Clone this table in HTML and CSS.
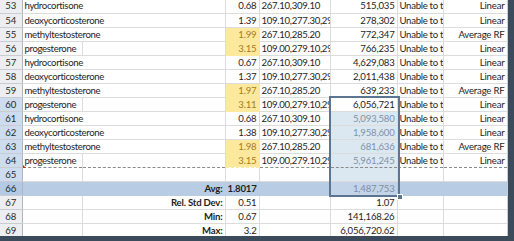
FILE: index.html
```html
<!DOCTYPE html>
<html>
<head>
<meta charset="utf-8">
<link rel="stylesheet" href="styles.css">
</head>
<body>
<div class="window">
  <div class="sheet">
    <table class="grid">
      <colgroup>
        <col class="c-h"><col class="c-a"><col class="c-b"><col class="c-c"><col class="c-d"><col class="c-e"><col class="c-f"><col class="c-g">
      </colgroup>
      <tbody>
        <tr><th>53</th><td class="ov">hydrocortisone</td><td></td><td class="r">0.68</td><td class="clip">267.10,309.10</td><td class="r">515,035</td><td class="clip">Unable to t</td><td class="r">Linear</td></tr>
        <tr><th>54</th><td class="ov">deoxycorticosterone</td><td></td><td class="r">1.39</td><td class="clip">109.10,277.30,29</td><td class="r">278,302</td><td class="clip">Unable to t</td><td class="r">Linear</td></tr>
        <tr><th>55</th><td class="ov">methyltestosterone</td><td></td><td class="r neutral">1.99</td><td class="clip">267.10,285.20</td><td class="r">772,347</td><td class="clip">Unable to t</td><td class="r">Average RF</td></tr>
        <tr><th>56</th><td class="nm">progesterone</td><td></td><td class="r neutral">3.15</td><td class="clip">109.00,279.10,29</td><td class="r">766,235</td><td class="clip">Unable to t</td><td class="r">Linear</td></tr>
        <tr><th>57</th><td class="ov">hydrocortisone</td><td></td><td class="r">0.67</td><td class="clip">267.10,309.10</td><td class="r">4,629,083</td><td class="clip">Unable to t</td><td class="r">Linear</td></tr>
        <tr><th>58</th><td class="ov">deoxycorticosterone</td><td></td><td class="r">1.37</td><td class="clip">109.10,277.30,29</td><td class="r">2,011,438</td><td class="clip">Unable to t</td><td class="r">Linear</td></tr>
        <tr><th>59</th><td class="ov">methyltestosterone</td><td></td><td class="r neutral">1.97</td><td class="clip">267.10,285.20</td><td class="r">639,233</td><td class="clip">Unable to t</td><td class="r">Average RF</td></tr>
        <tr class="selrow"><th>60</th><td class="nm">progesterone</td><td></td><td class="r neutral">3.11</td><td class="clip">109.00,279.10,29</td><td class="r active">6,056,721<div class="selection"><span class="handle"></span></div></td><td class="clip">Unable to t</td><td class="r">Linear</td></tr>
        <tr class="selrow"><th>61</th><td class="ov">hydrocortisone</td><td></td><td class="r">0.68</td><td class="clip">267.10,309.10</td><td class="r sel">5,093,580</td><td class="clip">Unable to t</td><td class="r">Linear</td></tr>
        <tr class="selrow"><th>62</th><td class="ov">deoxycorticosterone</td><td></td><td class="r">1.38</td><td class="clip">109.10,277.30,29</td><td class="r sel">1,958,600</td><td class="clip">Unable to t</td><td class="r">Linear</td></tr>
        <tr class="selrow"><th>63</th><td class="ov">methyltestosterone</td><td></td><td class="r neutral">1.98</td><td class="clip">267.10,285.20</td><td class="r sel">681,636</td><td class="clip">Unable to t</td><td class="r">Average RF</td></tr>
        <tr class="selrow dashed"><th>64</th><td class="nm mark">progesterone</td><td></td><td class="r neutral">3.15</td><td class="clip">109.00,279.10,29</td><td class="r sel">5,961,245</td><td class="clip">Unable to t</td><td class="r">Linear</td></tr>
        <tr class="selrow"><th>65</th><td></td><td></td><td></td><td></td><td class="sel"></td><td></td><td></td></tr>
        <tr class="band"><th>66</th><td></td><td class="r b">Avg:</td><td class="r b">1.8017</td><td></td><td class="r sel">1,487,753</td><td></td><td></td></tr>
        <tr><th>67</th><td></td><td class="r b">Rel. Std Dev:</td><td class="r">0.51</td><td></td><td class="r">1.07</td><td></td><td></td></tr>
        <tr><th>68</th><td></td><td class="r b">Min:</td><td class="r">0.67</td><td></td><td class="r">141,168.26</td><td></td><td></td></tr>
        <tr><th>69</th><td></td><td class="r b">Max:</td><td class="r">3.2</td><td></td><td class="r">6,056,720.62</td><td></td><td></td></tr>
      </tbody>
    </table>
  </div>
</div>
</body>
</html>
```

FILE: styles.css
```css
html, body {
  margin: 0;
  padding: 0;
  background: #ffffff;
}

.window {
  width: 514px;
  height: 241px;
  box-sizing: border-box;
  overflow: hidden;
  display: grid;
  grid-template-columns: 508px 6px;
  grid-template-rows: 236px 5px;
  background: #3c4b5c;
}

.sheet {
  overflow: hidden;
  background: #fff;
  border-right: 1px solid #c9ced4;
}

.grid {
  border-collapse: collapse;
  table-layout: fixed;
  width: 507px;
  margin-top: -1px;
  font-family: Lato, "Open Sans", sans-serif;
  font-size: 9.6px;
  letter-spacing: -0.2px;
  color: #1e1e1e;
}

.c-h { width: 22px; }
.c-a { width: 60px; }
.c-b { width: 143px; }
.c-c { width: 34px; }
.c-d { width: 71px; }
.c-e { width: 67px; }
.c-f { width: 46px; }
.c-g { width: 64px; }

.grid tr {
  height: 14px;
}

.grid th {
  background: #eceef1;
  color: #2b2b2b;
  font-weight: normal;
  text-align: center;
  border-right: 1px solid #aeb5bd;
  border-bottom: 1px solid #c9cdd2;
  padding: 0;
  line-height: 13px;
  letter-spacing: 0;
}

.grid td {
  padding: 0 2px;
  white-space: nowrap;
  overflow: visible;
  line-height: 13px;
  border-right: 1px solid #dcdcdc;
  border-bottom: 1px solid #dcdcdc;
}

.grid td.ov {
  border-right-color: transparent;
  letter-spacing: -0.35px;
}

.grid td.nm {
  letter-spacing: -0.35px;
}

.grid td.clip {
  overflow: hidden;
  text-overflow: clip;
  letter-spacing: -0.3px;
}

.grid td.r {
  text-align: right;
}

.grid td.b {
  font-weight: bold;
}

.grid td.neutral {
  background: #fde99e;
  color: #a57c1e;
  border-color: #fde99e;
}

.selrow th {
  background: #cddcee;
}

.grid td.sel {
  background: #dbe7f1;
  color: #7f93a6;
}

.grid td.active {
  position: relative;
  background: #fff;
}

.selection {
  position: absolute;
  left: -2px;
  top: -2px;
  width: 67px;
  height: 97px;
  border: 2px solid #5c7590;
  pointer-events: none;
}

.handle {
  position: absolute;
  right: -5px;
  bottom: -5px;
  width: 4px;
  height: 4px;
  background: #5c7590;
  border: 1px solid #fff;
}

.dashed td {
  border-bottom: 1px dashed #8a8a8a;
}

.grid td.mark {
  position: relative;
}

.grid td.mark::before {
  content: "";
  position: absolute;
  left: 0;
  bottom: -1px;
  border-left: 3px solid #d42020;
  border-top: 3px solid transparent;
}

.band th {
  background: #b4c9e3;
}

.band td {
  background: #b8cce4;
  border-color: #b8cce4;
}

.band td.sel {
  background: #c3d4e8;
  color: #7b8fa3;
}
```
